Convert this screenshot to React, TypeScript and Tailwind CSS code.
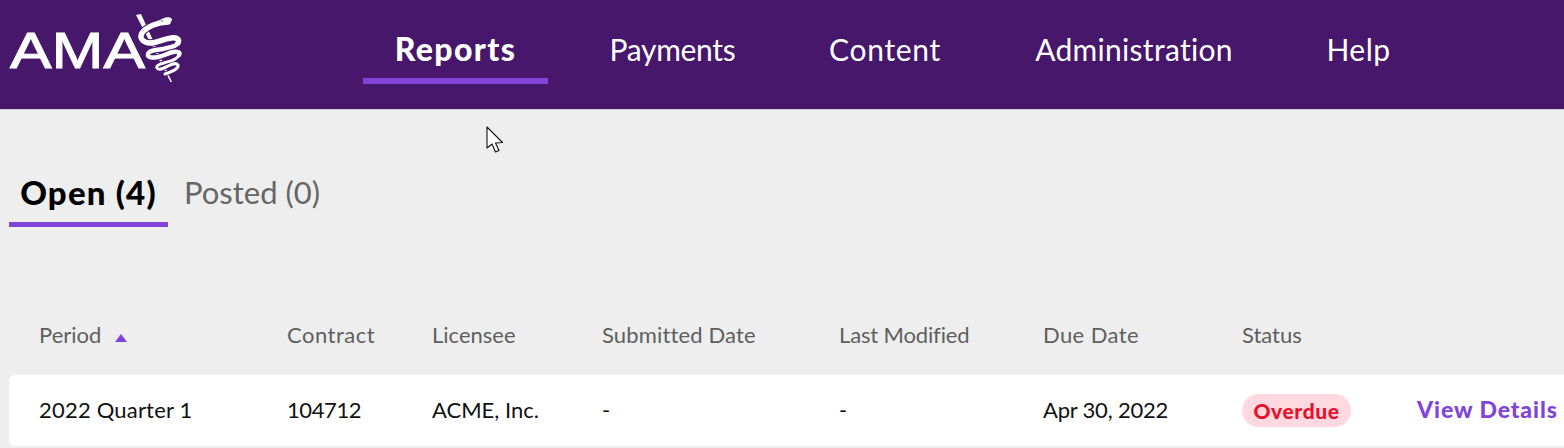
const font = { fontFamily: '"Lato", "Open Sans", sans-serif' };

const coilA = "M168 22 C158 22 146 27 142 33 C139 38 143 43 150 43 C157 43 163 39 171 38 C176 37 180 39 178 43";
const coilB = "M178 43 C176 47 170 47 163 49 C156 50 149 50 148 54 C147 58 153 58 158 57 C164 56 168 53 173 52 C177 51 181 52 179 55";
const coilC = "M179 55 C177 60 170 61 164 63 C159 64 156 66 157 68 C159 71 164 68 168 66 C172 64 176 62 178 65 C179 68 174 71 165 74";

function Logo() {
  return (
    <svg width="190" height="90" viewBox="0 0 190 90" className="block">
      <text x="10" y="68" fill="#fff" stroke="#fff" strokeWidth="1" fontFamily="Liberation Sans, Arial, sans-serif" fontSize="50" textLength="135" lengthAdjust="spacingAndGlyphs">AMA</text>
      <path d="M136 15 L141 14 L172 82 L170.5 82 Z" fill="#fff" />
      <g fill="none" stroke="#46176b" strokeLinecap="round">
        <path d={coilA} strokeWidth="7.5" />
        <path d={coilB} strokeWidth="6.5" />
        <path d={coilC} strokeWidth="5" />
      </g>
      <g fill="none" stroke="#fff" strokeLinecap="round">
        <path d={coilA} strokeWidth="5.4" />
        <path d={coilB} strokeWidth="4.4" />
        <path d={coilC} strokeWidth="3" />
      </g>
      <path d="M160 20 C164 17 170 16 172 19 C172 23 166 25 160 25Z" fill="#fff" />
      <circle cx="162" cy="21" r="0.7" fill="#46176b" />
    </svg>
  );
}

function NavItem({ label, className }: { label: string; className: string }) {
  return (
    <a className={`flex h-[61px] items-center justify-center whitespace-nowrap border-b-[6px] pb-[3px] text-[30px] leading-none text-white ${className}`}>
      {label}
    </a>
  );
}

function Cursor() {
  return (
    <svg width="20" height="28" viewBox="0 0 20 28" className="absolute left-[486px] top-[126px]">
      <path d="M1 1 L1 22 L6 18 L9.5 26 L13 24.5 L9.5 17 L16.5 16.5 Z" fill="#fff" stroke="#111" strokeWidth="1.1" strokeLinejoin="round" />
    </svg>
  );
}

const grid = "grid grid-cols-[248px_145px_170px_237px_204px_199px_175px_1fr]";

export default function App() {
  return (
    <div className="relative h-[448px] w-[1564px] overflow-hidden bg-[#eeeeee]" style={font}>
      <header className="flex h-[110px] items-start border-b border-[#cfcfcf] bg-[#46176b]">
        <div className="w-[363px] shrink-0"><Logo /></div>
        <nav className="flex items-start pt-[23px]">
          <NavItem label="Reports" className="w-[185px] border-[#8144d8] text-[32px] font-black tracking-[1.4px]" />
          <div className="ml-[62px] flex gap-[94px]">
            <NavItem label="Payments" className="w-[125px] border-transparent tracking-[-0.3px]" />
            <NavItem label="Content" className="w-[112px] border-transparent tracking-[0.7px]" />
            <NavItem label="Administration" className="w-[198px] border-transparent tracking-[0.3px]" />
            <NavItem label="Help" className="w-[63px] border-transparent tracking-[0.5px]" />
          </div>
        </nav>
      </header>
      <Cursor />
      <div className="ml-[9px] mt-[62px] flex items-end">
        <div className="flex h-[55px] w-[159px] items-start justify-center whitespace-nowrap border-b-[5px] border-[#8144d8] pt-[1px] text-[33px] font-black leading-[38px] tracking-[1.2px] text-black">Open (4)</div>
        <div className="ml-[16px] h-[55px] pt-[1px] text-[31px] leading-[38px] text-[#666666]">Posted (0)</div>
      </div>
      <div className={`${grid} ml-[9px] mt-[95px] h-[53px] pl-[30px] text-[22px] leading-[26px] text-[#5f5f5f]`}>
        <div className="flex items-start gap-[13px]">
          Period
          <svg width="14" height="10" viewBox="0 0 14 10" className="mt-[11px]"><path d="M7 1 L13 9 H1 Z" fill="#8144d8" /></svg>
        </div>
        <div className="tracking-[0.5px]">Contract</div>
        <div>Licensee</div>
        <div className="tracking-[0.15px]">Submitted Date</div>
        <div className="tracking-[-0.15px]">Last Modified</div>
        <div className="tracking-[0.4px]">Due Date</div>
        <div>Status</div>
      </div>
      <div className={`${grid} ml-[9px] h-[71px] items-center rounded-l-[6px] bg-white pb-[2px] pl-[30px] text-[22px] text-[#111111]`}>
        <div className="tracking-[0.2px]">2022 Quarter 1</div>
        <div className="tracking-[-0.4px]">104712</div>
        <div>ACME, Inc.</div>
        <div>-</div>
        <div>-</div>
        <div className="tracking-[-0.2px]">Apr 30, 2022</div>
        <div className="mt-[2px]">
          <span className="inline-flex h-[33px] w-[109px] items-center justify-center rounded-full bg-[#ffd9df] pb-[1px] text-[21px] font-black tracking-[0.6px] text-[#e8112d]">Overdue</span>
        </div>
        <div className="whitespace-nowrap text-[23px] font-black tracking-[0.9px] text-[#8144d8]">View Details</div>
      </div>
    </div>
  );
}
